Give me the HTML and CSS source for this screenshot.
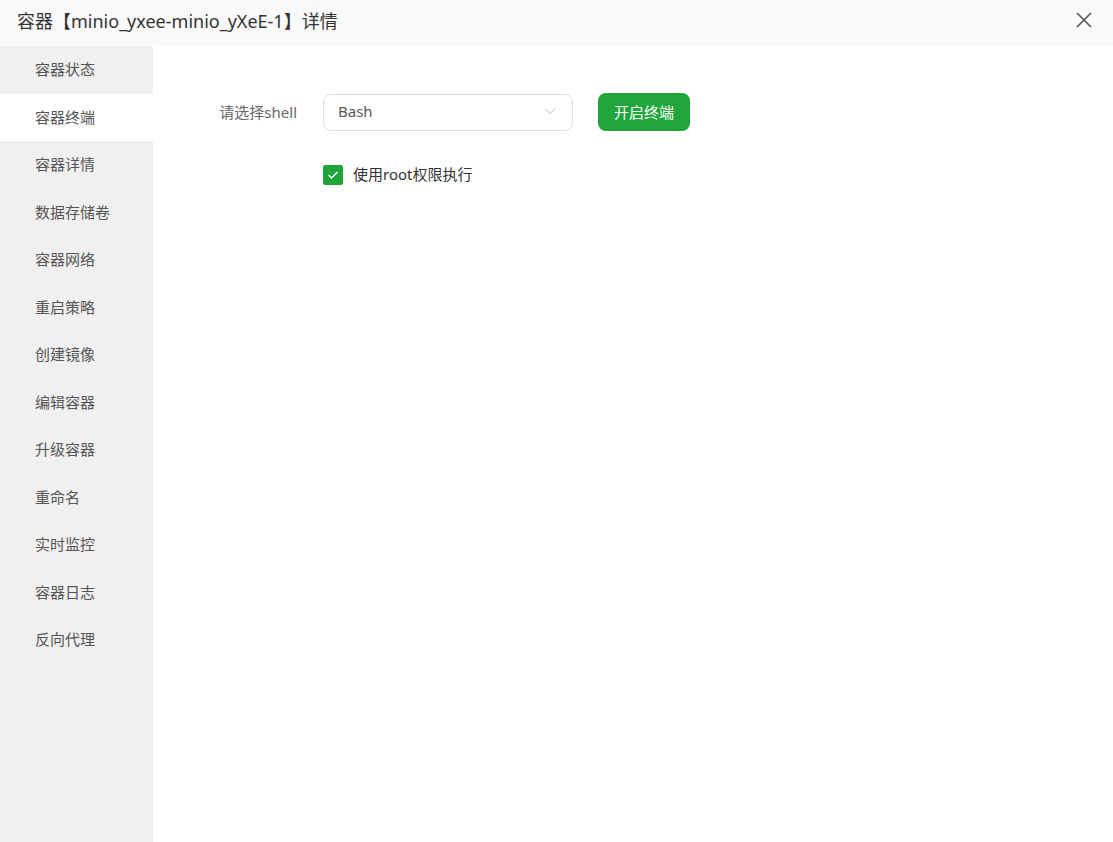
FILE: index.html
```html
<!DOCTYPE html>
<html lang="zh-CN">
<head>
<meta charset="utf-8">
<link rel="stylesheet" href="styles.css">
</head>
<body>
<div class="dialog">
  <div class="titlebar">
    <div class="title">容器【minio_yxee-minio_yXeE-1】详情</div>
    <div class="close">
      <svg width="18" height="18" viewBox="0 0 18 18"><path d="M2 2L16 16M16 2L2 16" stroke="#555" stroke-width="1.6" fill="none"/></svg>
    </div>
  </div>
  <div class="body">
    <div class="sidebar">
      <div class="nav-item">容器状态</div>
      <div class="nav-item active">容器终端</div>
      <div class="nav-item">容器详情</div>
      <div class="nav-item">数据存储卷</div>
      <div class="nav-item">容器网络</div>
      <div class="nav-item">重启策略</div>
      <div class="nav-item">创建镜像</div>
      <div class="nav-item">编辑容器</div>
      <div class="nav-item">升级容器</div>
      <div class="nav-item">重命名</div>
      <div class="nav-item">实时监控</div>
      <div class="nav-item">容器日志</div>
      <div class="nav-item">反向代理</div>
    </div>
    <div class="content">
      <div class="form-row">
        <div class="label">请选择shell</div>
        <div class="select">
          <span>Bash</span>
          <svg width="12" height="8" viewBox="0 0 12 8"><path d="M1 1.5L6 6.5L11 1.5" stroke="#b8b8b8" stroke-width="1" fill="none"/></svg>
        </div>
        <button class="btn">开启终端</button>
      </div>
      <div class="check-row">
        <span class="checkbox">
          <svg width="12" height="10" viewBox="0 0 12 10"><path d="M1.5 5L4.5 8L10.5 2" stroke="#fff" stroke-width="1.4" fill="none"/></svg>
        </span>
        <span class="check-label">使用root权限执行</span>
      </div>
    </div>
  </div>
</div>
</body>
</html>
```

FILE: styles.css
```css
* { box-sizing: border-box; }
html, body { margin: 0; padding: 0; }
body {
  width: 1113px;
  height: 842px;
  background: #fff;
  font-family: "Noto Sans", "Noto Sans CJK SC", sans-serif;
  color: #333;
  overflow: hidden;
}
.dialog { display: flex; flex-direction: column; height: 842px; }
.titlebar {
  height: 46px;
  background: #fafafa;
  display: flex;
  align-items: center;
  justify-content: space-between;
  padding: 0 20px 0 17px;
  flex-shrink: 0;
}
.title { font-size: 18px; color: #333; margin-top: -7px; }
.close { width: 18px; height: 18px; display: flex; margin-top: -7px; }
.body { display: flex; flex: 1; }
.sidebar {
  width: 153px;
  background: #f0f0f0;
  flex-shrink: 0;
}
.nav-item {
  height: 47.5px;
  line-height: 47.5px;
  padding-left: 35px;
  font-size: 15px;
  color: #555;
}
.nav-item.active { background: #fff; }
.content { flex: 1; padding-top: 47px; }
.form-row { display: flex; align-items: center; height: 38px; }
.label {
  width: 297px;
  margin-left: -153px;
  margin-top: -1px;
  text-align: right;
  font-size: 15px;
  color: #666;
}
.select {
  margin-left: 26px;
  width: 250px;
  height: 37px;
  border: 1px solid #dcdfe6;
  border-radius: 8px;
  display: flex;
  align-items: center;
  justify-content: space-between;
  padding: 0 16px 2px 14px;
  font-size: 15px;
  color: #555;
}
.btn {
  margin-left: 25px;
  width: 92px;
  height: 38px;
  border: none;
  border-radius: 8px;
  background: #20a53a;
  color: #fff;
  font-family: inherit;
  font-size: 15px;
  padding: 0 0 2px;
}
.check-row {
  display: flex;
  align-items: center;
  margin-top: 34px;
  padding-left: 170px;
}
.checkbox {
  width: 20px;
  height: 20px;
  background: #20a53a;
  border-radius: 2px;
  display: flex;
  align-items: center;
  justify-content: center;
}
.check-label { margin-left: 10px; font-size: 15px; color: #333; margin-top: -3px; }
```
